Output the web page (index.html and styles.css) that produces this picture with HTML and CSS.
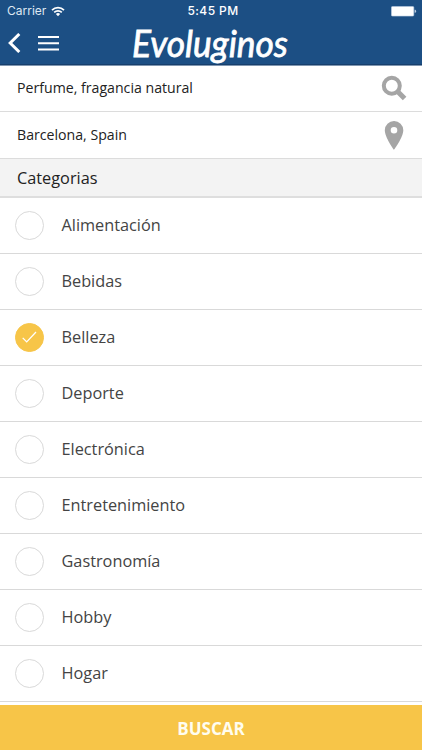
FILE: index.html
```html
<!DOCTYPE html>
<html lang="es">
<head>
<meta charset="utf-8">
<title>Evoluginos</title>
<link rel="stylesheet" href="styles.css">
</head>
<body>
<div class="app">
  <header class="header">
    <div class="status">
      <div class="carrier"><span>Carrier</span>
        <svg width="14" height="11" viewBox="0 0 14 11" fill="none" stroke="#fff" stroke-width="1.7"><path d="M1 4.1a8.6 8.6 0 0 1 12 0M3.2 6.4a5.4 5.4 0 0 1 7.6 0"/><path d="M4.9 8.1a3 3 0 0 1 4.2 0L7 10.2z" fill="#fff" stroke="none"/></svg>
      </div>
      <span class="time">5:45 PM</span>
      <svg class="battery" width="26" height="11" viewBox="0 0 26 11"><rect x=".4" y=".5" width="22.4" height="9.6" rx="1" fill="#fff" stroke="#b9cbe0" stroke-width=".6"/><path d="M23.6 3.8h.7q.8.2.8 1.5t-.8 1.5h-.7z" fill="#b9cbe0"/></svg>
    </div>
    <div class="nav">
      <svg class="back" width="13" height="20" viewBox="0 0 13 20" fill="none" stroke="#fff" stroke-width="3"><path d="M11.3 1 2.2 10l9.1 9"/></svg>
      <svg class="menu" width="21" height="16" viewBox="0 0 21 16" fill="none" stroke="#fff" stroke-width="2"><path d="M0 2h21M0 8.2h21M0 14.4h21"/></svg>
      <svg class="logo" width="162" height="48" viewBox="0 0 162 48"><text x="2" y="38.5" textLength="156" lengthAdjust="spacingAndGlyphs">Evoluginos</text></svg>
    </div>
  </header>
  <div class="field"><span>Perfume, fragancia natural</span>
    <svg width="26" height="26" viewBox="0 0 26 26" fill="none" stroke="#a5a5a5"><circle cx="10.8" cy="10.8" r="8" stroke-width="4"/><path d="m16.6 16.6 7 7" stroke-width="5"/></svg>
  </div>
  <div class="field place"><span>Barcelona, Spain</span>
    <svg width="26" height="30" viewBox="0 0 26 30"><path fill="#a5a5a5" fill-rule="evenodd" d="M13 1a9.2 9.2 0 0 0-9.2 9.2C3.8 17.2 13 29.8 13 29.8s9.3-12.6 9.3-19.6A9.2 9.2 0 0 0 13 1zm0 6a3.3 3.3 0 1 1 0 6.6A3.3 3.3 0 0 1 13 7z"/></svg>
  </div>
  <h2 class="heading">Categorias</h2>
  <ul class="list">
    <li><i class="radio"></i><span>Alimentación</span></li>
    <li><i class="radio"></i><span>Bebidas</span></li>
    <li><i class="radio checked"><svg width="15" height="12" viewBox="0 0 15 12" fill="none" stroke="#fff" stroke-width="1.3"><path d="m.7 6.9 4 4L14 1"/></svg></i><span>Belleza</span></li>
    <li><i class="radio"></i><span>Deporte</span></li>
    <li><i class="radio"></i><span>Electrónica</span></li>
    <li><i class="radio"></i><span>Entretenimiento</span></li>
    <li><i class="radio"></i><span>Gastronomía</span></li>
    <li><i class="radio"></i><span>Hobby</span></li>
    <li><i class="radio"></i><span>Hogar</span></li>
  </ul>
  <button class="submit">BUSCAR</button>
</div>
</body>
</html>
```
FILE: styles.css
```css
* { box-sizing: border-box; }
body { margin: 0; background: #fff; }
.app {
  width: 422px;
  height: 750px;
  display: flex;
  flex-direction: column;
  overflow: hidden;
  font-family: "Open Sans", sans-serif;
  color: #222;
}
.header {
  height: 66px;
  flex: none;
  background: #1c4f84;
  border-bottom: 1px solid #8097b1;
  box-shadow: inset 0 -1px #173f6c;
  color: #fff;
}
.status {
  height: 22px;
  display: grid;
  grid-template-columns: 1fr auto 1fr;
  align-items: center;
  padding: 0 5px 0 7px;
  font: 12px/22px Inter, sans-serif;
}
.carrier { display: flex; align-items: center; gap: 5px; color: #dfe8f2; }
.time { font-weight: 500; font-size: 12px; letter-spacing: .4px; padding-left: 2px; }
.battery { justify-self: end; }
.nav { height: 43px; display: flex; align-items: flex-start; padding-left: 8px; }
.back { margin-top: 11px; }
.menu { margin: 13px 0 0 17px; }
.logo { margin: -4px 0 0 71px; overflow: visible; }
.logo text {
  font-family: Lato, sans-serif;
  font-size: 37px;
  font-style: italic;
  font-weight: 400;
  fill: #fff;
  stroke: #fff;
  stroke-width: .8px;
}
.field {
  height: 46px;
  flex: none;
  display: flex;
  align-items: center;
  justify-content: space-between;
  padding: 0 15px 2px 17px;
  border-bottom: 1px solid #dcdcdc;
  font-size: 14.15px;
}
.place { height: 47px; padding-bottom: 1px; }
.heading {
  height: 39px;
  flex: none;
  margin: 0;
  padding: 1px 0 0 17px;
  background: #f3f3f3;
  border-bottom: 2px solid #dedede;
  font-size: 16.3px;
  line-height: 37px;
  font-weight: 400;
}
.list { margin: 0; padding: 0; list-style: none; flex: 1; }
.list li {
  height: 56px;
  display: flex;
  align-items: center;
  gap: 17.5px;
  padding: 0 0 1px 15px;
  border-bottom: 1px solid #d9d9d9;
  font-size: 16.3px;
  color: #444;
}
.radio {
  width: 29px;
  height: 29px;
  flex: none;
  border: 1px solid #d9d9d9;
  border-radius: 50%;
  display: grid;
  place-items: center;
}
.checked { background: #f7c548; border-color: #f7c548; }
.submit {
  height: 45px;
  flex: none;
  border: 0;
  padding: 1px 0 0;
  background: #f7c548;
  color: #fffdf0;
  font: 700 17px "Open Sans", sans-serif;
}
```
